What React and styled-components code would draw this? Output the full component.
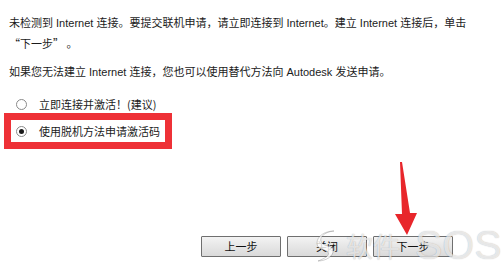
import styled, { createGlobalStyle } from "styled-components";

const GlobalStyle = createGlobalStyle`
  html, body {
    margin: 0;
    padding: 0;
    background: #fff;
  }
  body {
    font-family: "Liberation Sans Narrow", "Liberation Sans", "Noto Sans CJK SC", sans-serif;
    font-size: 11px;
    color: #1b1b1b;
  }
`;

const Page = styled.div`
  position: relative;
  width: 503px;
  height: 273px;
  box-sizing: border-box;
  padding: 13px 9px 16px;
  display: flex;
  flex-direction: column;
  overflow: hidden;
`;

const Para = styled.p`
  margin: ${(p) => p.$gap || 0}px 0 0;
  line-height: 20px;
  white-space: nowrap;
`;

const Cjk = styled.span`
  font-family: "Noto Sans CJK SC", sans-serif;
`;

const Options = styled.div`
  margin: 13px 0 0 -5px;
  display: flex;
  flex-direction: column;
  align-items: flex-start;
`;

const Option = styled.label`
  display: flex;
  align-items: center;
  gap: 12px;
  height: 18px;
  padding-left: 12px;
  font-family: "Noto Sans CJK SC", sans-serif;
`;

const Highlight = styled.div`
  display: flex;
  align-items: center;
  gap: 12px;
  box-sizing: border-box;
  width: 168px;
  height: 36px;
  border: 7px solid #ee3137;
  padding-left: 5px;
  font-family: "Noto Sans CJK SC", sans-serif;
`;

const Radio = styled.span`
  width: 11px;
  height: 11px;
  box-sizing: border-box;
  border-radius: 50%;
  border: 1px solid #8a8a8a;
  background: #fff;
  display: flex;
  align-items: center;
  justify-content: center;
  &::after {
    content: "";
    width: 5px;
    height: 5px;
    border-radius: 50%;
    background: ${(p) => (p.$checked ? "#1a1a1a" : "transparent")};
  }
`;

const ButtonRow = styled.div`
  margin-top: auto;
  display: flex;
  justify-content: flex-end;
  gap: 6px;
  padding-right: 41px;
`;

const Button = styled.button`
  width: 80px;
  height: 21px;
  padding: 0;
  border: 1px solid #6f6f6f;
  border-radius: 1px;
  background: linear-gradient(#f3f3f3, #e6e6e6 50%, #dadada);
  font-family: "Noto Sans CJK SC", sans-serif;
  font-size: 11px;
  color: #111;
  line-height: 19px;
`;

const Arrow = styled.svg`
  position: absolute;
  left: 0;
  top: 0;
  pointer-events: none;
`;

const Watermark = styled.div`
  position: absolute;
  left: 314px;
  top: 225px;
  display: flex;
  align-items: center;
  gap: 6px;
  pointer-events: none;
  font-family: "Noto Sans CJK SC", sans-serif;
  font-size: 27px;
  line-height: 1;
  color: rgba(255, 255, 255, 0.7);
  text-shadow: 0 0 1px rgba(0, 0, 0, 0.3);
`;

const Sos = styled.span`
  margin-left: 9px;
  font-family: "Liberation Sans Narrow", "Liberation Sans", sans-serif;
  font-size: 41px;
  line-height: 1;
`;

export default function App() {
  return (
    <>
      <GlobalStyle />
      <Page>
        <Para>
          未检测到 Internet 连接。要提交联机申请，请立即连接到 Internet。建立 Internet 连接后，单击
        </Para>
        <Para>
          <Cjk>“下一步” 。</Cjk>
        </Para>
        <Para $gap={8}>
          如果您无法建立 Internet 连接，您也可以使用替代方法向 Autodesk 发送申请。
        </Para>
        <Options>
          <Option>
            <Radio />
            立即连接并激活！(建议)
          </Option>
          <Highlight>
            <Radio $checked />
            使用脱机方法申请激活码
          </Highlight>
        </Options>
        <ButtonRow>
          <Button>上一步</Button>
          <Button>关闭</Button>
          <Button>下一步</Button>
        </ButtonRow>
        <Watermark>
          <svg width="26" height="36" viewBox="0 0 26 36">
            <path
              d="M20 3 C10 4 4 10 8 15 C11 19 18 17 19 22 C20 28 12 33 4 33 C12 30 16 27 14 24 C11 21 3 22 3 15 C3 8 11 3 20 3 Z"
              fill="rgba(255,255,255,0.8)"
              stroke="rgba(0,0,0,0.18)"
              strokeWidth="1"
            />
          </svg>
          <span>软件</span>
          <Sos>SOS</Sos>
        </Watermark>
        <Arrow width="503" height="273" viewBox="0 0 503 273">
          <polygon
            points="400,162 402,162 410,213 417,213 407,235 395,214 402,214"
            fill="#e8262b"
          />
        </Arrow>
      </Page>
    </>
  );
}
